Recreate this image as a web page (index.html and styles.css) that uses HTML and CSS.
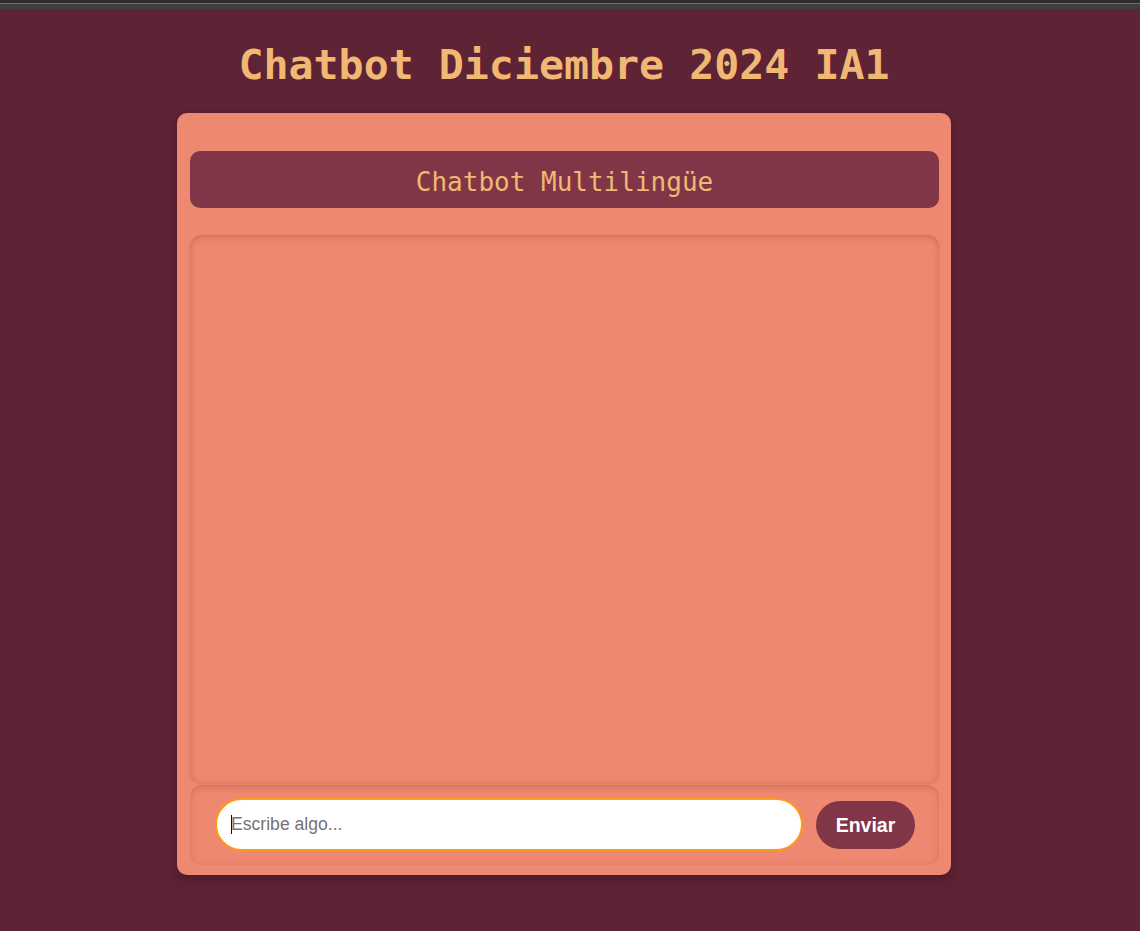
FILE: index.html
```html
<!DOCTYPE html>
<html lang="es">
<head>
<meta charset="utf-8">
<title>Chatbot Diciembre 2024 IA1</title>
<link rel="stylesheet" href="styles.css">
</head>
<body>
<div class="chrome"><div class="chrome-dark"></div><div class="chrome-line"></div><div class="chrome-mid"></div></div>
<main class="page">
  <h1 class="title">Chatbot Diciembre 2024 IA1</h1>
  <section class="card">
    <header class="card-header">Chatbot Multilingüe</header>
    <div class="messages"></div>
    <form class="composer" onsubmit="return false">
      <div class="field"><span class="caret"></span><input class="input" type="text" placeholder="Escribe algo..."></div>
      <button class="send" type="button">Enviar</button>
    </form>
  </section>
</main>
</body>
</html>
```

FILE: styles.css
```css
* { box-sizing: border-box; }
html, body { margin: 0; padding: 0; }
body {
  background: #5e2335;
  min-height: 931px;
  font-family: "Liberation Sans", Arial, sans-serif;
}
.chrome { display: flex; flex-direction: column; }
.chrome-dark { height: 3px; background: #2c2c2c; }
.chrome-line { height: 1px; background: #707070; }
.chrome-mid { height: 5px; background: #3f3f3f; }
.page {
  display: flex;
  flex-direction: column;
  align-items: center;
  padding-right: 12px;
}
.title {
  margin: 30px 0 0;
  height: 74px;
  font-family: "DejaVu Sans Mono", "Liberation Mono", monospace;
  font-weight: bold;
  font-size: 41.6px;
  line-height: 52px;
  color: #f0b872;
  letter-spacing: 0;
}
.card {
  width: 774px;
  background: #ef8870;
  border-radius: 10px;
  padding: 38px 12px 10px 13px;
  box-shadow: 0 4px 12px rgba(0,0,0,0.25);
  display: flex;
  flex-direction: column;
}
.card-header {
  height: 57px;
  background: #813648;
  border-radius: 10px;
  color: #f0b872;
  font-family: "DejaVu Sans Mono", "Liberation Mono", monospace;
  font-size: 26px;
  padding-top: 5px;
  display: flex;
  align-items: center;
  justify-content: center;
}
.messages {
  margin-top: 27px;
  height: 548px;
  border-radius: 12px;
  box-shadow: inset 0 2px 6px rgba(150, 60, 40, 0.35), 0 1px 3px rgba(150,60,40,0.2);
}
.composer {
  margin: 2px 0 0;
  height: 80px;
  border-radius: 12px;
  box-shadow: inset 0 2px 6px rgba(150, 60, 40, 0.3);
  display: flex;
  align-items: flex-start;
  padding: 13px 24px 0 25px;
  gap: 13px;
}
.field { position: relative; flex: 1; }
.input {
  width: 100%;
  height: 53px;
  border: 2px solid #ff9a1a;
  border-radius: 27px;
  background: #fff;
  padding: 0 14px;
  font-family: "Liberation Sans", Arial, sans-serif;
  font-size: 17.6px;
  color: #222;
  outline: none;
}
.input::placeholder { color: #757575; }
.caret {
  position: absolute;
  left: 16px;
  top: 17px;
  width: 1px;
  height: 19px;
  background: #111;
}
.send {
  margin-top: 3px;
  width: 99px;
  height: 48px;
  border: none;
  border-radius: 24px;
  background: #813648;
  color: #fff;
  font-family: "Liberation Sans", Arial, sans-serif;
  font-weight: bold;
  font-size: 19.5px;
  cursor: pointer;
}
```
